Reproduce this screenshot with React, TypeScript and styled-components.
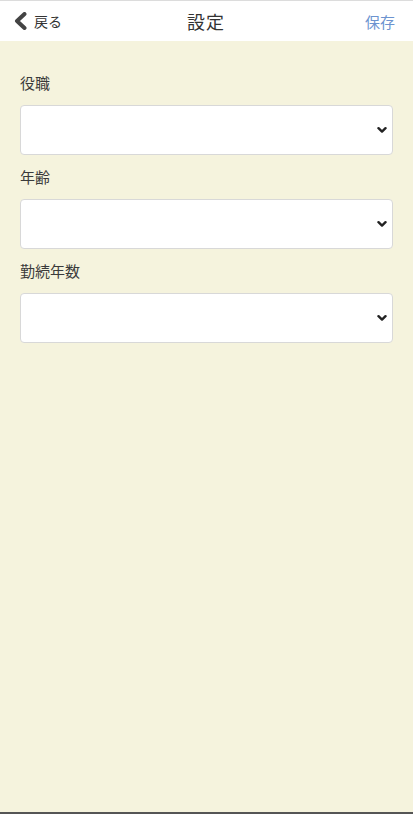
import React from 'react';
import styled, { createGlobalStyle } from 'styled-components';

const GlobalStyle = createGlobalStyle`
    html, body {
        margin: 0;
        padding: 0;
        background: #f5f3dd;
        font-family: "Noto Sans CJK JP", "Noto Sans", sans-serif;
    }
`;

const Page = styled.div`
    min-height: 814px;
    box-sizing: border-box;
    border-top: 1px solid #dcdcdc;
    border-bottom: 2px solid #555;
    background: #f5f3dd;
`;

const Header = styled.div`
    height: 40px;
    background: #ffffff;
    display: grid;
    grid-template-columns: 1fr auto 1fr;
    align-items: center;
    padding: 0 18px 0 13px;
`;

const Back = styled.div`
    display: flex;
    align-items: center;
    gap: 5px;
    font-size: 14px;
    color: #333;
`;

const Title = styled.div`
    font-size: 18px;
    color: #333;
    letter-spacing: 1px;
    padding-left: 4px;
`;

const Save = styled.div`
    justify-self: end;
    font-size: 15px;
    color: #6c93cf;
`;

const Form = styled.div`
    padding: 30px 20px 0 20px;
`;

const Field = styled.div`
    margin-bottom: 10px;
`;

const Label = styled.div`
    font-size: 15px;
    color: #3a3a3a;
    line-height: 24px;
    margin-bottom: 10px;
`;

const SelectBox = styled.div`
    height: 48px;
    background: #fff;
    border: 1px solid #d8d8d8;
    border-radius: 4px;
    display: flex;
    align-items: center;
    justify-content: flex-end;
    padding-right: 5px;
`;

const Chevron = ({ size = 10, weight = 2.4 }: { size?: number; weight?: number }) => (
    <svg width={size} height={size} viewBox="0 0 10 10">
        <path d="M1.5 3.2 L5 6.6 L8.5 3.2" fill="none" stroke="#222" strokeWidth={weight} strokeLinecap="round" strokeLinejoin="round" />
    </svg>
);

const fields = ['役職', '年齢', '勤続年数'];

export default function App() {
    return (
        <Page>
            <GlobalStyle />
            <Header>
                <Back>
                    <svg width="16" height="18" viewBox="0 0 16 18">
                        <path d="M11.5 2 L4 9 L11.5 16" fill="none" stroke="#444" strokeWidth="4" strokeLinecap="round" strokeLinejoin="round" />
                    </svg>
                    戻る
                </Back>
                <Title>設定</Title>
                <Save>保存</Save>
            </Header>
            <Form>
                {fields.map((f) => (
                    <Field key={f}>
                        <Label>{f}</Label>
                        <SelectBox>
                            <Chevron />
                        </SelectBox>
                    </Field>
                ))}
            </Form>
        </Page>
    );
}
